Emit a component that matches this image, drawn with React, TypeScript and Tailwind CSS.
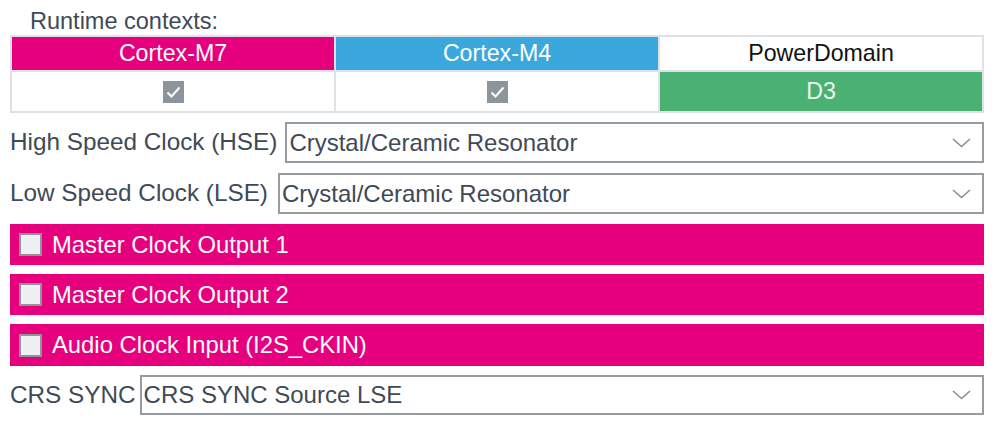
import React from 'react';

// ランタイムコンテキスト設定パネル

const Chevron = () => (
  <svg width="19" height="10" viewBox="0 0 19 10" className="shrink-0">
    <polyline points="1,1 9.5,8.5 18,1" fill="none" stroke="#8a8f95" strokeWidth="1.6" />
  </svg>
);

const CheckedBox = () => (
  <div className="w-[21px] h-[22px] bg-[#8e949b] flex items-center justify-center">
    <svg width="15" height="12" viewBox="0 0 15 12">
      <polyline points="1.5,6.5 5.5,10.5 13.5,1.5" fill="none" stroke="#ffffff" strokeWidth="2" />
    </svg>
  </div>
);

function SelectRow({ label, value, gap }: { label: string; value: string; gap: string }) {
  return (
    <div className="flex items-center h-full">
      <span className="text-[24.3px] text-[#404a57] whitespace-nowrap">{label}</span>
      <div
        className={`${gap} flex-1 h-full border-2 border-[#979ca3] bg-white flex items-center justify-between pl-[2px] pr-[11px]`}
      >
        <span className="text-[24px] text-[#404a57] whitespace-nowrap">{value}</span>
        <Chevron />
      </div>
    </div>
  );
}

function PinkRow({ label }: { label: string }) {
  return (
    <div className="h-full bg-[#e6007e] flex items-center">
      <div className="ml-[9px] w-[23px] h-[23px] border-2 border-[#8e949b] bg-[#eef0f3]" />
      <span className="ml-[10px] text-[23.8px] text-white whitespace-nowrap">{label}</span>
    </div>
  );
}

export default function App() {
  return (
    <div className="w-[998px] h-[430px] bg-white overflow-hidden font-['Liberation_Sans',Arial,sans-serif]">
      <div className="ml-[10px] w-[974px] flex flex-col">
        {/* タイトル */}
        <div className="pt-[7px] pl-[20px] text-[23.5px] leading-[28px] text-[#404a57]">Runtime contexts:</div>

        {/* コンテキスト表 */}
        <div className="grid grid-cols-3 grid-rows-[33px_39px] gap-[2px] p-[2px] bg-[#dde2e8] text-[23.2px]">
          <div className="bg-[#e6007e] text-white flex items-center justify-center">Cortex-M7</div>
          <div className="bg-[#3aa8dc] text-white flex items-center justify-center">Cortex-M4</div>
          <div className="bg-white text-[#111111] flex items-center justify-center">PowerDomain</div>
          <div className="bg-white flex items-center justify-center">
            <CheckedBox />
          </div>
          <div className="bg-white flex items-center justify-center">
            <CheckedBox />
          </div>
          <div className="bg-[#4bb172] text-[#eaf6ee] flex items-center justify-center">D3</div>
        </div>

        <div className="mt-[9px] h-[41px]">
          <SelectRow label="High Speed Clock (HSE)" value="Crystal/Ceramic Resonator" gap="ml-[8px]" />
        </div>
        <div className="mt-[10px] h-[41px]">
          <SelectRow label="Low Speed Clock (LSE)" value="Crystal/Ceramic Resonator" gap="ml-[10px]" />
        </div>

        <div className="mt-[10px] h-[41px]">
          <PinkRow label="Master Clock Output 1" />
        </div>
        <div className="mt-[9px] h-[41px]">
          <PinkRow label="Master Clock Output 2" />
        </div>
        <div className="mt-[9px] h-[42px]">
          <PinkRow label="Audio Clock Input (I2S_CKIN)" />
        </div>

        <div className="mt-[9px] h-[40px]">
          <SelectRow label="CRS SYNC" value="CRS SYNC Source LSE" gap="ml-[4px]" />
        </div>
      </div>
    </div>
  );
}
